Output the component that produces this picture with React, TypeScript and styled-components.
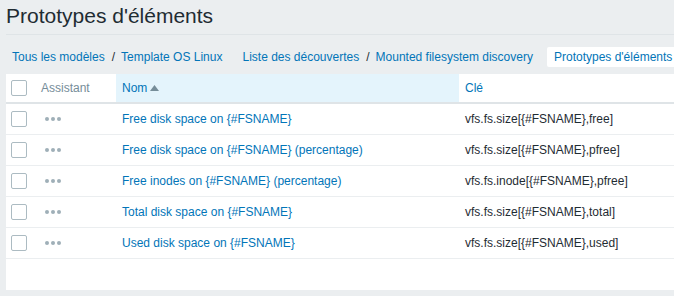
import React from 'react';
import styled, { createGlobalStyle } from 'styled-components';

const Global = createGlobalStyle`
  html, body { margin: 0; padding: 0; background: #ebeef0; overflow: hidden; }
  body { font-family: "Liberation Sans", Arial, sans-serif; font-size: 12px; color: #1f2c33; }
`;

const Page = styled.div`
  width: 674px;
  height: 296px;
  overflow: hidden;
`;

const Header = styled.header`
  margin-left: 6px;
  padding: 4px 0 6px;
  border-bottom: 1px solid #dfe4e7;
`;

const Title = styled.h1`
  margin: 0;
  font-size: 21px;
  line-height: 24px;
  font-weight: normal;
  color: #1f2c33;
  white-space: nowrap;
`;

const Nav = styled.nav`
  display: flex;
  align-items: center;
  height: 20px;
  padding: 12px 0 7px 12px;
  white-space: nowrap;
`;

const Group = styled.div`
  display: flex;
  align-items: center;
  line-height: 20px;
  & + & { margin-left: 20px; }
`;

const Crumb = styled.a`
  color: #0275b8;
  text-decoration: none;
`;

const Sep = styled.span`
  margin: 0 6px 0 7px;
  color: #1f2c33;
`;

const Active = styled.span`
  margin-left: 14px;
  padding: 0 7px;
  background: #ffffff;
  color: #0275b8;
  line-height: 20px;
  border-radius: 2px;
`;

const Panel = styled.section`
  margin-left: 6px;
  background: #ffffff;
`;

const COLS = '29px 81px 343px 1fr';

const HeadRow = styled.div`
  display: grid;
  grid-template-columns: ${COLS};
  height: 28px;
  border-bottom: 2px solid #dfe4e7;
`;

const Row = styled.div`
  display: grid;
  grid-template-columns: ${COLS};
  height: 30px;
  border-bottom: 1px solid #ebeef0;
`;

const Cell = styled.div<{ $sorted?: boolean; $tight?: boolean; $muted?: boolean; $link?: boolean }>`
  display: flex;
  align-items: center;
  padding-left: ${(p) => (p.$tight ? '5px' : '6px')};
  background: ${(p) => (p.$sorted ? '#e4f4fc' : 'transparent')};
  color: ${(p) => (p.$muted ? '#768d99' : p.$link ? '#0275b8' : '#1f2c33')};
  white-space: nowrap;
  overflow: hidden;
`;

const Box = styled.span`
  display: inline-block;
  width: 16px;
  height: 16px;
  box-sizing: border-box;
  border: 1px solid #acbbc2;
  border-radius: 2px;
  background: #fff;
`;

const Link = styled.a`
  color: #0275b8;
  text-decoration: none;
`;

const DotsIcon = styled.svg`
  margin-left: 4px;
  display: block;
`;

const SortArrow = styled.svg`
  margin-left: 3px;
  display: block;
`;

const Footer = styled.div`
  height: 31px;
`;

const Dots = () => (
  <DotsIcon width="16" height="4" viewBox="0 0 16 4">
    <circle cx="2" cy="2" r="2" fill="#9fafb8" />
    <circle cx="8" cy="2" r="2" fill="#9fafb8" />
    <circle cx="14" cy="2" r="2" fill="#9fafb8" />
  </DotsIcon>
);

const rows = [
  { name: 'Free disk space on {#FSNAME}', key: 'vfs.fs.size[{#FSNAME},free]' },
  { name: 'Free disk space on {#FSNAME} (percentage)', key: 'vfs.fs.size[{#FSNAME},pfree]' },
  { name: 'Free inodes on {#FSNAME} (percentage)', key: 'vfs.fs.inode[{#FSNAME},pfree]' },
  { name: 'Total disk space on {#FSNAME}', key: 'vfs.fs.size[{#FSNAME},total]' },
  { name: 'Used disk space on {#FSNAME}', key: 'vfs.fs.size[{#FSNAME},used]' },
];

export default function App() {
  return (
    <Page>
      <Global />
      <Header>
        <Title>Prototypes d'éléments</Title>
      </Header>
      <Nav>
        <Group>
          <Crumb>Tous les modèles</Crumb>
          <Sep>/</Sep>
          <Crumb>Template OS Linux</Crumb>
        </Group>
        <Group>
          <Crumb>Liste des découvertes</Crumb>
          <Sep>/</Sep>
          <Crumb>Mounted filesystem discovery</Crumb>
        </Group>
        <Active>Prototypes d'éléments</Active>
      </Nav>
      <Panel>
        <HeadRow>
          <Cell $tight><Box /></Cell>
          <Cell $muted>Assistant</Cell>
          <Cell $sorted $link>
            Nom
            <SortArrow width="9" height="6" viewBox="0 0 9 6">
              <path d="M4.5 0 L9 6 L0 6 Z" fill="#768d99" />
            </SortArrow>
          </Cell>
          <Cell $link>Clé</Cell>
        </HeadRow>
        {rows.map((r) => (
          <Row key={r.key}>
            <Cell $tight><Box /></Cell>
            <Cell><Dots /></Cell>
            <Cell><Link>{r.name}</Link></Cell>
            <Cell>{r.key}</Cell>
          </Row>
        ))}
        <Footer />
      </Panel>
    </Page>
  );
}
